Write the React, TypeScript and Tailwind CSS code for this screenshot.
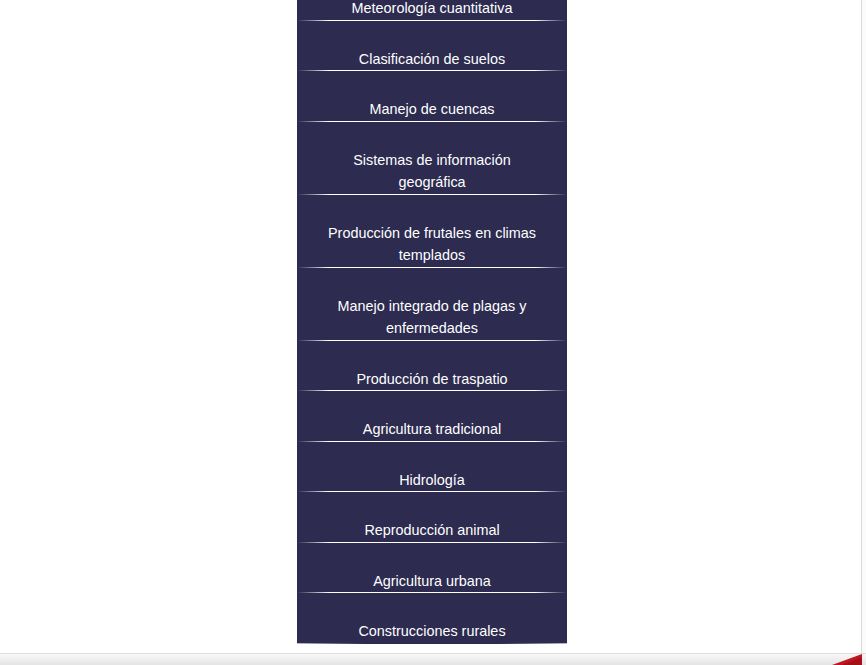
import React from "react";

const items = [
  "Meteorología cuantitativa",
  "Clasificación de suelos",
  "Manejo de cuencas",
  "Sistemas de información geográfica",
  "Producción de frutales en climas templados",
  "Manejo integrado de plagas y enfermedades",
  "Producción de traspatio",
  "Agricultura tradicional",
  "Hidrología",
  "Reproducción animal",
  "Agricultura urbana",
  "Construcciones rurales",
];

export default function App() {
  return (
    <div
      className="h-[665px] w-[866px] overflow-hidden flex flex-col bg-white"
      style={{ fontFamily: '"Liberation Sans", Arial, sans-serif' }}
    >
      <div className="h-[653px] flex shrink-0 overflow-hidden">
        <div className="w-[862px] shrink-0 border-r border-[#dcdcdc] pl-[297px] flex items-start">
          <div className="w-[270px] bg-[#2d2b4f] mt-[-30px] flex flex-col">
            {items.map((t, i) => (
              <div key={t} className="flex flex-col">
                <div className="pt-[27px] px-[22px] text-center text-[14.4px] leading-[22.5px] text-white">
                  {t}
                </div>
                {i < items.length - 1 ? (
                  <div className="h-px bg-[linear-gradient(to_right,transparent,#ffffff_12%,#ffffff_88%,transparent)]" />
                ) : (
                  <div className="h-px bg-[linear-gradient(to_right,#bdbdc8,transparent_25%,transparent_75%,#bdbdc8)]" />
                )}
              </div>
            ))}
          </div>
        </div>
        <div className="flex-1 bg-[#fbfbfb]" />
      </div>
      <div className="flex-1 border-t border-[#dddddd] bg-[linear-gradient(to_bottom,#f8f8f8,#e4e4e4)] flex justify-end items-end pr-[4px]">
        <svg width="30" height="11" viewBox="0 0 30 11" className="block">
          <polygon points="0,11 30,0 30,11" fill="#c0161f" />
          <polygon points="10,11 30,3 30,11" fill="#a3101a" />
        </svg>
      </div>
    </div>
  );
}
